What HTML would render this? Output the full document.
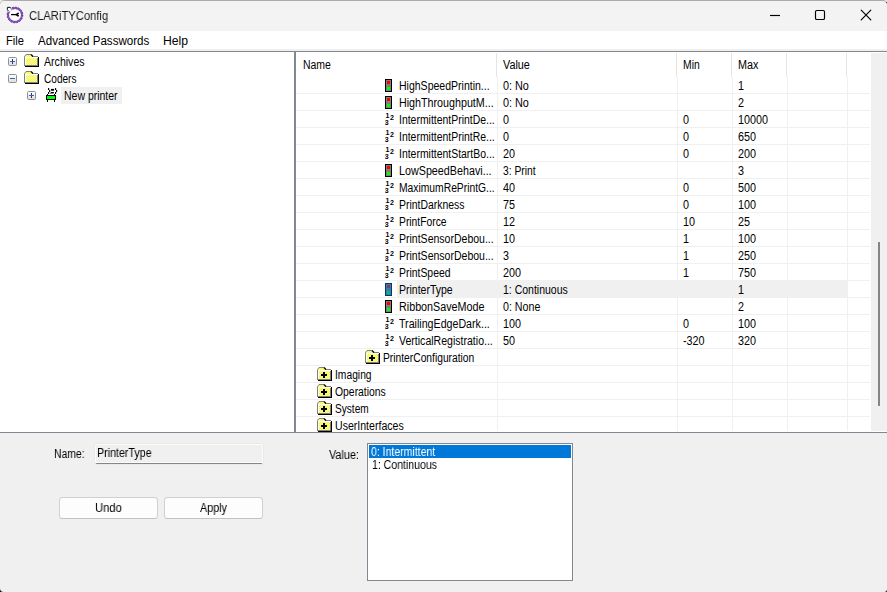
<!DOCTYPE html>
<html><head><meta charset="utf-8"><title>CLARiTYConfig</title>
<style>
html,body{margin:0;padding:0;}
body{width:887px;height:592px;overflow:hidden;background:#f0f0f0;position:relative;font-family:"Liberation Sans",sans-serif;font-size:11px;color:#000;}
.abs,.ic,.t{position:absolute;}
.t{white-space:nowrap;font-size:12px;line-height:14px;height:14px;}
#title{left:0;top:0;width:887px;height:31px;background:#f3f3f3;}
#menu{left:0;top:31px;width:887px;height:18px;background:#fff;}
.seg{font-size:12px;line-height:15px;height:15px;}
.ttl{color:#1c1c1c;will-change:transform;}
.bm{font-size:12px;line-height:14px;height:14px;will-change:transform;}
#tree{left:0;top:52px;width:294px;height:380px;background:#fff;}
#grid{left:296px;top:52px;width:591px;height:380px;background:#fff;overflow:hidden;}
.hl{background:#f0f0f0;}
.vl{position:absolute;width:1px;background:#f0f0f0;}
.hs{position:absolute;width:1px;background:#e5e5e5;top:1px;height:24px;}
.rl{position:absolute;height:1px;background:#f0f0f0;left:0;width:574px;}
.btn{position:absolute;box-sizing:border-box;border:1px solid #d0d0d0;border-bottom-color:#c2c2c2;border-radius:3.5px;background:#fdfdfd;height:22px;}
</style></head><body>
<svg width="0" height="0" style="position:absolute"><defs>
<pattern id="dith" width="2" height="2" patternUnits="userSpaceOnUse"><rect width="2" height="2" fill="#ffff00"/><rect x="0" y="0" width="1" height="1" fill="#f2f2f2"/><rect x="1" y="1" width="1" height="1" fill="#f2f2f2"/></pattern>
<linearGradient id="gb" x1="0" y1="0" x2="0" y2="1"><stop offset="0" stop-color="#fff"/><stop offset="1" stop-color="#dcdcdc"/></linearGradient>
</defs></svg>

<div id="title" class="abs"></div>
<div class="abs" style="left:0;top:0;width:887px;height:1px;background:#ababab"></div>
<svg class="ic" style="left:6px;top:6px" width="18" height="18" viewBox="0 0 18 18"><circle cx="9" cy="9" r="8.3" fill="#fafafa"/><circle cx="9" cy="9" r="7.05" fill="#fff" stroke="#9152cc" stroke-width="2"/><circle cx="9" cy="9" r="7.9" fill="none" stroke="#2e1a5e" stroke-width="0.7" stroke-dasharray="1.6 1.5"/><circle cx="9" cy="9" r="6.3" fill="none" stroke="#2e1a5e" stroke-width="0.5" stroke-dasharray="1.4 1.6"/><path d="M1 1 H4.4 L5.9 2.3 L5.2 4.3 L4.3 5.2 L2.3 5.9 L1 4.6 Z" fill="#fff"/><path d="M2.6 5.2 L1.4 3.8 V1.4 H4 L5.3 2.5" fill="none" stroke="#111" stroke-width="1"/><path d="M5 8.6 H10.5" stroke="#000" stroke-width="1.3" fill="none"/><path d="M12.1 7.5 L10.4 8.6 L12.1 9.8" stroke="#000" stroke-width="1.7" fill="none" stroke-linejoin="round" stroke-linecap="round"/></svg>
<div class="t seg ttl" id="x1" style="left:29px;top:9px;transform:scaleX(0.9350);transform-origin:0 0;">CLARiTYConfig</div>
<svg class="ic" style="left:760px;top:0" width="127" height="31" viewBox="0 0 127 31"><path d="M10 15.5 H20" stroke="#000" stroke-width="1.15"/><rect x="55.5" y="10.5" width="9" height="9" rx="1.3" fill="none" stroke="#000" stroke-width="1.15"/><path d="M101.2 10.2 L110.8 19.8 M110.8 10.2 L101.2 19.8" stroke="#000" stroke-width="1.2" fill="none" stroke-linecap="round"/></svg>
<div id="menu" class="abs"></div>
<div class="t seg" id="x2" style="left:6.3px;top:34px;transform:scaleX(0.9254);transform-origin:0 0;">File</div>
<div class="t seg" id="x3" style="left:38px;top:34px;transform:scaleX(0.9644);transform-origin:0 0;">Advanced Passwords</div>
<div class="t seg" id="x4" style="left:163px;top:34px;transform:scaleX(1.0167);transform-origin:0 0;">Help</div>
<div class="abs" style="left:0;top:51px;width:887px;height:1px;background:#828790"></div>
<div id="tree" class="abs"></div>
<div class="abs" style="left:294px;top:52px;width:2px;height:380px;background:#828790"></div>
<svg class="ic" style="left:8px;top:57px" width="9" height="9" viewBox="0 0 9 9"><rect x="0.5" y="0.5" width="8" height="8" rx="1" fill="url(#gb)" stroke="#8f8f8f"/><path d="M4.5 2 V7" stroke="#24357a" stroke-width="1" fill="none" shape-rendering="crispEdges"/><path d="M2 4.5 H7" stroke="#3f5fb0" stroke-width="1" fill="none" shape-rendering="crispEdges"/></svg>
<svg class="ic" style="left:24px;top:54px" width="15" height="13" viewBox="0 0 15 13" shape-rendering="crispEdges"><path d="M1 2.5 L2 1 L7 1 L8.5 2.5 L14 2.5 L14 12 L1 12 Z" fill="url(#dith)"/><path d="M0.5 12 V2.5 L2 0.5 H7" fill="none" stroke="#808080" shape-rendering="auto"/><path d="M8 2.5 H14" fill="none" stroke="#808080"/><path d="M7 0.5 L9 2.5" fill="none" stroke="#000" stroke-width="1.2" shape-rendering="auto"/><path d="M1.5 11 V3.5 H13" fill="none" stroke="#fff"/><path d="M14.5 3 V12.5 H1" fill="none" stroke="#000"/><path d="M13.5 4 V11.5 H1" fill="none" stroke="#808080"/></svg>
<div class="t" id="x5" style="left:44px;top:55px;transform:scaleX(0.8823);transform-origin:0 0;">Archives</div>
<svg class="ic" style="left:8px;top:74px" width="9" height="9" viewBox="0 0 9 9"><rect x="0.5" y="0.5" width="8" height="8" rx="1" fill="url(#gb)" stroke="#8f8f8f"/><path d="M2 4.5 H7" stroke="#3f5fb0" stroke-width="1" fill="none" shape-rendering="crispEdges"/></svg>
<svg class="ic" style="left:24px;top:71px" width="15" height="13" viewBox="0 0 15 13" shape-rendering="crispEdges"><path d="M1 2.5 L2 1 L7 1 L8.5 2.5 L14 2.5 L14 12 L1 12 Z" fill="url(#dith)"/><path d="M0.5 12 V2.5 L2 0.5 H7" fill="none" stroke="#808080" shape-rendering="auto"/><path d="M8 2.5 H14" fill="none" stroke="#808080"/><path d="M7 0.5 L9 2.5" fill="none" stroke="#000" stroke-width="1.2" shape-rendering="auto"/><path d="M1.5 11 V3.5 H13" fill="none" stroke="#fff"/><path d="M14.5 3 V12.5 H1" fill="none" stroke="#000"/><path d="M13.5 4 V11.5 H1" fill="none" stroke="#808080"/></svg>
<div class="t" id="x6" style="left:44px;top:72px;transform:scaleX(0.8401);transform-origin:0 0;">Coders</div>
<svg class="ic" style="left:27px;top:91px" width="9" height="9" viewBox="0 0 9 9"><rect x="0.5" y="0.5" width="8" height="8" rx="1" fill="url(#gb)" stroke="#8f8f8f"/><path d="M4.5 2 V7" stroke="#24357a" stroke-width="1" fill="none" shape-rendering="crispEdges"/><path d="M2 4.5 H7" stroke="#3f5fb0" stroke-width="1" fill="none" shape-rendering="crispEdges"/></svg>
<svg class="ic" style="left:45px;top:87px" width="14" height="16" viewBox="0 0 14 16"><g shape-rendering="crispEdges"><rect x="1" y="8" width="10" height="5" fill="#000"/><rect x="2" y="9" width="8" height="3" fill="#00ff00"/><rect x="2" y="13" width="1" height="2" fill="#000"/><rect x="9" y="13" width="1" height="2" fill="#000"/><rect x="2" y="7" width="1" height="1" fill="#000"/><rect x="9" y="7" width="1" height="1" fill="#000"/></g><g fill="#000"><rect x="3" y="1" width="1.2" height="2.1" rx="0.3"/><rect x="4" y="3" width="1.2" height="2.1" rx="0.3"/><rect x="3" y="5" width="1.2" height="2.1" rx="0.3"/><rect x="10" y="1" width="1.2" height="2.1" rx="0.3"/><rect x="11" y="3" width="1.2" height="2.1" rx="0.3"/><rect x="10" y="5" width="1.2" height="2.1" rx="0.3"/><rect x="5.9" y="1.9" width="3.2" height="1.8"/><path d="M5 6.6 L6 5 H9.2 L8.4 6.6 Z"/></g></svg>
<div class="abs hl" style="left:61px;top:87px;width:61px;height:17px;"></div>
<div class="t" id="x7" style="left:63.5px;top:89px;transform:scaleX(0.8735);transform-origin:0 0;">New printer</div>
<div id="grid" class="abs">
<div class="hs" style="left:200px"></div>
<div class="hs" style="left:380px"></div>
<div class="hs" style="left:435px"></div>
<div class="hs" style="left:490px"></div>
<div class="hs" style="left:550px"></div>
<div class="abs hl" style="left:101px;top:229px;width:450px;height:16px;"></div>
<div class="vl" style="left:201px;top:25px;height:354px"></div>
<div class="vl" style="left:381px;top:25px;height:354px"></div>
<div class="vl" style="left:436px;top:25px;height:354px"></div>
<div class="vl" style="left:491px;top:25px;height:354px"></div>
<div class="vl" style="left:551px;top:25px;height:354px"></div>
<div class="rl" style="top:41px"></div>
<div class="rl" style="top:58px"></div>
<div class="rl" style="top:75px"></div>
<div class="rl" style="top:92px"></div>
<div class="rl" style="top:109px"></div>
<div class="rl" style="top:126px"></div>
<div class="rl" style="top:143px"></div>
<div class="rl" style="top:160px"></div>
<div class="rl" style="top:177px"></div>
<div class="rl" style="top:194px"></div>
<div class="rl" style="top:211px"></div>
<div class="rl" style="top:228px"></div>
<div class="rl" style="top:245px"></div>
<div class="rl" style="top:262px"></div>
<div class="rl" style="top:279px"></div>
<div class="rl" style="top:296px"></div>
<div class="rl" style="top:313px"></div>
<div class="rl" style="top:330px"></div>
<div class="rl" style="top:347px"></div>
<div class="rl" style="top:364px"></div>
<div class="abs" style="left:575px;top:1px;width:16px;height:378px;background:#f0f0f0"></div>
<div class="abs" style="left:582px;top:190px;width:2px;height:164px;background:#858585"></div>
<div class="t" id="x8" style="left:7px;top:6px;transform:scaleX(0.8714);transform-origin:0 0;">Name</div>
<div class="t" id="x9" style="left:207px;top:6px;transform:scaleX(0.9023);transform-origin:0 0;">Value</div>
<div class="t" id="x10" style="left:387px;top:6px;transform:scaleX(0.8633);transform-origin:0 0;">Min</div>
<div class="t" id="x11" style="left:442px;top:6px;transform:scaleX(0.9000);transform-origin:0 0;">Max</div>
<svg class="ic" style="left:89px;top:27px" width="7" height="13" viewBox="0 0 7 13" shape-rendering="crispEdges"><rect x="0" y="0" width="7" height="13" fill="#000"/><rect x="1" y="1" width="5" height="11" fill="#808080"/><rect x="2" y="2" width="3" height="3" fill="#ff0000"/><rect x="2" y="8" width="3" height="3" fill="#00ff00"/></svg>
<div class="t" id="x12" style="left:103px;top:27px;transform:scaleX(0.8762);transform-origin:0 0;">HighSpeedPrintin...</div>
<div class="t" id="x13" style="left:207px;top:27px;transform:scaleX(0.9028);transform-origin:0 0;">0: No</div>
<div class="t" id="x14" style="left:442px;top:27px;transform:scaleX(0.9000);transform-origin:0 0;">1</div>
<svg class="ic" style="left:89px;top:44px" width="7" height="13" viewBox="0 0 7 13" shape-rendering="crispEdges"><rect x="0" y="0" width="7" height="13" fill="#000"/><rect x="1" y="1" width="5" height="11" fill="#808080"/><rect x="2" y="2" width="3" height="3" fill="#ff0000"/><rect x="2" y="8" width="3" height="3" fill="#00ff00"/></svg>
<div class="t" id="x15" style="left:103px;top:44px;transform:scaleX(0.8929);transform-origin:0 0;">HighThroughputM...</div>
<div class="t" id="x16" style="left:207px;top:44px;transform:scaleX(0.9028);transform-origin:0 0;">0: No</div>
<div class="t" id="x17" style="left:442px;top:44px;transform:scaleX(0.9000);transform-origin:0 0;">2</div>
<svg class="ic" style="left:89px;top:61px" width="11" height="13" viewBox="0 0 11 13"><text x="0.6" y="5" font-family="Liberation Sans, sans-serif" font-size="7" font-weight="bold" fill="#000">1</text><text x="5" y="7" font-family="Liberation Sans, sans-serif" font-size="7" font-weight="bold" fill="#000">2</text><text x="-0.2" y="12" font-family="Liberation Sans, sans-serif" font-size="7" font-weight="bold" fill="#000">3</text></svg>
<div class="t" id="x18" style="left:103px;top:61px;transform:scaleX(0.8696);transform-origin:0 0;">IntermittentPrintDe...</div>
<div class="t" id="x19" style="left:207px;top:61px;transform:scaleX(0.9000);transform-origin:0 0;">0</div>
<div class="t" id="x20" style="left:387px;top:61px;transform:scaleX(0.9000);transform-origin:0 0;">0</div>
<div class="t" id="x21" style="left:442px;top:61px;transform:scaleX(0.9000);transform-origin:0 0;">10000</div>
<svg class="ic" style="left:89px;top:78px" width="11" height="13" viewBox="0 0 11 13"><text x="0.6" y="5" font-family="Liberation Sans, sans-serif" font-size="7" font-weight="bold" fill="#000">1</text><text x="5" y="7" font-family="Liberation Sans, sans-serif" font-size="7" font-weight="bold" fill="#000">2</text><text x="-0.2" y="12" font-family="Liberation Sans, sans-serif" font-size="7" font-weight="bold" fill="#000">3</text></svg>
<div class="t" id="x22" style="left:103px;top:78px;transform:scaleX(0.8696);transform-origin:0 0;">IntermittentPrintRe...</div>
<div class="t" id="x23" style="left:207px;top:78px;transform:scaleX(0.9000);transform-origin:0 0;">0</div>
<div class="t" id="x24" style="left:387px;top:78px;transform:scaleX(0.9000);transform-origin:0 0;">0</div>
<div class="t" id="x25" style="left:442px;top:78px;transform:scaleX(0.9000);transform-origin:0 0;">650</div>
<svg class="ic" style="left:89px;top:95px" width="11" height="13" viewBox="0 0 11 13"><text x="0.6" y="5" font-family="Liberation Sans, sans-serif" font-size="7" font-weight="bold" fill="#000">1</text><text x="5" y="7" font-family="Liberation Sans, sans-serif" font-size="7" font-weight="bold" fill="#000">2</text><text x="-0.2" y="12" font-family="Liberation Sans, sans-serif" font-size="7" font-weight="bold" fill="#000">3</text></svg>
<div class="t" id="x26" style="left:103px;top:95px;transform:scaleX(0.8696);transform-origin:0 0;">IntermittentStartBo...</div>
<div class="t" id="x27" style="left:207px;top:95px;transform:scaleX(0.9000);transform-origin:0 0;">20</div>
<div class="t" id="x28" style="left:387px;top:95px;transform:scaleX(0.9000);transform-origin:0 0;">0</div>
<div class="t" id="x29" style="left:442px;top:95px;transform:scaleX(0.9000);transform-origin:0 0;">200</div>
<svg class="ic" style="left:89px;top:112px" width="7" height="13" viewBox="0 0 7 13" shape-rendering="crispEdges"><rect x="0" y="0" width="7" height="13" fill="#000"/><rect x="1" y="1" width="5" height="11" fill="#808080"/><rect x="2" y="2" width="3" height="3" fill="#ff0000"/><rect x="2" y="8" width="3" height="3" fill="#00ff00"/></svg>
<div class="t" id="x30" style="left:103px;top:112px;transform:scaleX(0.8955);transform-origin:0 0;">LowSpeedBehavi...</div>
<div class="t" id="x31" style="left:207px;top:112px;transform:scaleX(0.8575);transform-origin:0 0;">3: Print</div>
<div class="t" id="x32" style="left:442px;top:112px;transform:scaleX(0.9000);transform-origin:0 0;">3</div>
<svg class="ic" style="left:89px;top:129px" width="11" height="13" viewBox="0 0 11 13"><text x="0.6" y="5" font-family="Liberation Sans, sans-serif" font-size="7" font-weight="bold" fill="#000">1</text><text x="5" y="7" font-family="Liberation Sans, sans-serif" font-size="7" font-weight="bold" fill="#000">2</text><text x="-0.2" y="12" font-family="Liberation Sans, sans-serif" font-size="7" font-weight="bold" fill="#000">3</text></svg>
<div class="t" id="x33" style="left:103px;top:129px;transform:scaleX(0.8594);transform-origin:0 0;">MaximumRePrintG...</div>
<div class="t" id="x34" style="left:207px;top:129px;transform:scaleX(0.9000);transform-origin:0 0;">40</div>
<div class="t" id="x35" style="left:387px;top:129px;transform:scaleX(0.9000);transform-origin:0 0;">0</div>
<div class="t" id="x36" style="left:442px;top:129px;transform:scaleX(0.9000);transform-origin:0 0;">500</div>
<svg class="ic" style="left:89px;top:146px" width="11" height="13" viewBox="0 0 11 13"><text x="0.6" y="5" font-family="Liberation Sans, sans-serif" font-size="7" font-weight="bold" fill="#000">1</text><text x="5" y="7" font-family="Liberation Sans, sans-serif" font-size="7" font-weight="bold" fill="#000">2</text><text x="-0.2" y="12" font-family="Liberation Sans, sans-serif" font-size="7" font-weight="bold" fill="#000">3</text></svg>
<div class="t" id="x37" style="left:103px;top:146px;transform:scaleX(0.8692);transform-origin:0 0;">PrintDarkness</div>
<div class="t" id="x38" style="left:207px;top:146px;transform:scaleX(0.9000);transform-origin:0 0;">75</div>
<div class="t" id="x39" style="left:387px;top:146px;transform:scaleX(0.9000);transform-origin:0 0;">0</div>
<div class="t" id="x40" style="left:442px;top:146px;transform:scaleX(0.9000);transform-origin:0 0;">100</div>
<svg class="ic" style="left:89px;top:163px" width="11" height="13" viewBox="0 0 11 13"><text x="0.6" y="5" font-family="Liberation Sans, sans-serif" font-size="7" font-weight="bold" fill="#000">1</text><text x="5" y="7" font-family="Liberation Sans, sans-serif" font-size="7" font-weight="bold" fill="#000">2</text><text x="-0.2" y="12" font-family="Liberation Sans, sans-serif" font-size="7" font-weight="bold" fill="#000">3</text></svg>
<div class="t" id="x41" style="left:103px;top:163px;transform:scaleX(0.8598);transform-origin:0 0;">PrintForce</div>
<div class="t" id="x42" style="left:207px;top:163px;transform:scaleX(0.9000);transform-origin:0 0;">12</div>
<div class="t" id="x43" style="left:387px;top:163px;transform:scaleX(0.9000);transform-origin:0 0;">10</div>
<div class="t" id="x44" style="left:442px;top:163px;transform:scaleX(0.9000);transform-origin:0 0;">25</div>
<svg class="ic" style="left:89px;top:180px" width="11" height="13" viewBox="0 0 11 13"><text x="0.6" y="5" font-family="Liberation Sans, sans-serif" font-size="7" font-weight="bold" fill="#000">1</text><text x="5" y="7" font-family="Liberation Sans, sans-serif" font-size="7" font-weight="bold" fill="#000">2</text><text x="-0.2" y="12" font-family="Liberation Sans, sans-serif" font-size="7" font-weight="bold" fill="#000">3</text></svg>
<div class="t" id="x45" style="left:103px;top:180px;transform:scaleX(0.8763);transform-origin:0 0;">PrintSensorDebou...</div>
<div class="t" id="x46" style="left:207px;top:180px;transform:scaleX(0.9000);transform-origin:0 0;">10</div>
<div class="t" id="x47" style="left:387px;top:180px;transform:scaleX(0.9000);transform-origin:0 0;">1</div>
<div class="t" id="x48" style="left:442px;top:180px;transform:scaleX(0.9000);transform-origin:0 0;">100</div>
<svg class="ic" style="left:89px;top:197px" width="11" height="13" viewBox="0 0 11 13"><text x="0.6" y="5" font-family="Liberation Sans, sans-serif" font-size="7" font-weight="bold" fill="#000">1</text><text x="5" y="7" font-family="Liberation Sans, sans-serif" font-size="7" font-weight="bold" fill="#000">2</text><text x="-0.2" y="12" font-family="Liberation Sans, sans-serif" font-size="7" font-weight="bold" fill="#000">3</text></svg>
<div class="t" id="x49" style="left:103px;top:197px;transform:scaleX(0.8763);transform-origin:0 0;">PrintSensorDebou...</div>
<div class="t" id="x50" style="left:207px;top:197px;transform:scaleX(0.9000);transform-origin:0 0;">3</div>
<div class="t" id="x51" style="left:387px;top:197px;transform:scaleX(0.9000);transform-origin:0 0;">1</div>
<div class="t" id="x52" style="left:442px;top:197px;transform:scaleX(0.9000);transform-origin:0 0;">250</div>
<svg class="ic" style="left:89px;top:214px" width="11" height="13" viewBox="0 0 11 13"><text x="0.6" y="5" font-family="Liberation Sans, sans-serif" font-size="7" font-weight="bold" fill="#000">1</text><text x="5" y="7" font-family="Liberation Sans, sans-serif" font-size="7" font-weight="bold" fill="#000">2</text><text x="-0.2" y="12" font-family="Liberation Sans, sans-serif" font-size="7" font-weight="bold" fill="#000">3</text></svg>
<div class="t" id="x53" style="left:103px;top:214px;transform:scaleX(0.8674);transform-origin:0 0;">PrintSpeed</div>
<div class="t" id="x54" style="left:207px;top:214px;transform:scaleX(0.9000);transform-origin:0 0;">200</div>
<div class="t" id="x55" style="left:387px;top:214px;transform:scaleX(0.9000);transform-origin:0 0;">1</div>
<div class="t" id="x56" style="left:442px;top:214px;transform:scaleX(0.9000);transform-origin:0 0;">750</div>
<svg class="ic" style="left:89px;top:231px" width="7" height="13" viewBox="0 0 7 13" shape-rendering="crispEdges"><rect x="0" y="0" width="7" height="13" fill="#003c6b"/><rect x="1" y="1" width="5" height="11" fill="#407cab"/><rect x="2" y="2" width="3" height="3" fill="#7f3c6b"/><rect x="2" y="8" width="3" height="3" fill="#00bb6b"/></svg>
<div class="t" id="x57" style="left:103px;top:231px;transform:scaleX(0.8752);transform-origin:0 0;">PrinterType</div>
<div class="t" id="x58" style="left:207px;top:231px;transform:scaleX(0.8749);transform-origin:0 0;">1: Continuous</div>
<div class="t" id="x59" style="left:442px;top:231px;transform:scaleX(0.9000);transform-origin:0 0;">1</div>
<svg class="ic" style="left:89px;top:248px" width="7" height="13" viewBox="0 0 7 13" shape-rendering="crispEdges"><rect x="0" y="0" width="7" height="13" fill="#000"/><rect x="1" y="1" width="5" height="11" fill="#808080"/><rect x="2" y="2" width="3" height="3" fill="#ff0000"/><rect x="2" y="8" width="3" height="3" fill="#00ff00"/></svg>
<div class="t" id="x60" style="left:103px;top:248px;transform:scaleX(0.8962);transform-origin:0 0;">RibbonSaveMode</div>
<div class="t" id="x61" style="left:207px;top:248px;transform:scaleX(0.8898);transform-origin:0 0;">0: None</div>
<div class="t" id="x62" style="left:442px;top:248px;transform:scaleX(0.9000);transform-origin:0 0;">2</div>
<svg class="ic" style="left:89px;top:265px" width="11" height="13" viewBox="0 0 11 13"><text x="0.6" y="5" font-family="Liberation Sans, sans-serif" font-size="7" font-weight="bold" fill="#000">1</text><text x="5" y="7" font-family="Liberation Sans, sans-serif" font-size="7" font-weight="bold" fill="#000">2</text><text x="-0.2" y="12" font-family="Liberation Sans, sans-serif" font-size="7" font-weight="bold" fill="#000">3</text></svg>
<div class="t" id="x63" style="left:103px;top:265px;transform:scaleX(0.8879);transform-origin:0 0;">TrailingEdgeDark...</div>
<div class="t" id="x64" style="left:207px;top:265px;transform:scaleX(0.9000);transform-origin:0 0;">100</div>
<div class="t" id="x65" style="left:387px;top:265px;transform:scaleX(0.9000);transform-origin:0 0;">0</div>
<div class="t" id="x66" style="left:442px;top:265px;transform:scaleX(0.9000);transform-origin:0 0;">100</div>
<svg class="ic" style="left:89px;top:282px" width="11" height="13" viewBox="0 0 11 13"><text x="0.6" y="5" font-family="Liberation Sans, sans-serif" font-size="7" font-weight="bold" fill="#000">1</text><text x="5" y="7" font-family="Liberation Sans, sans-serif" font-size="7" font-weight="bold" fill="#000">2</text><text x="-0.2" y="12" font-family="Liberation Sans, sans-serif" font-size="7" font-weight="bold" fill="#000">3</text></svg>
<div class="t" id="x67" style="left:103px;top:282px;transform:scaleX(0.8789);transform-origin:0 0;">VerticalRegistratio...</div>
<div class="t" id="x68" style="left:207px;top:282px;transform:scaleX(0.9000);transform-origin:0 0;">50</div>
<div class="t" id="x69" style="left:387px;top:282px;transform:scaleX(0.9000);transform-origin:0 0;">-320</div>
<div class="t" id="x70" style="left:442px;top:282px;transform:scaleX(0.9000);transform-origin:0 0;">320</div>
<svg class="ic" style="left:69px;top:298px" width="15" height="14" viewBox="0 0 15 14" shape-rendering="crispEdges"><path d="M1 2.5 L2 1 L7 1 L8.5 2.5 L14 2.5 L14 13 L1 13 Z" fill="url(#dith)"/><path d="M0.5 13 V2.5 L2 0.5 H7" fill="none" stroke="#808080" shape-rendering="auto"/><path d="M8 2.5 H14" fill="none" stroke="#808080"/><path d="M7 0.5 L9 2.5" fill="none" stroke="#000" stroke-width="1.2" shape-rendering="auto"/><path d="M1.5 12 V3.5 H13" fill="none" stroke="#fff"/><path d="M14.5 3 V13.5 H1" fill="none" stroke="#000"/><path d="M13.5 4 V12.5 H1" fill="none" stroke="#808080"/><rect x="4" y="7" width="6" height="2" fill="#000"/><rect x="6" y="5" width="2" height="6" fill="#000"/></svg>
<div class="t" id="x71" style="left:87.30000000000001px;top:299px;transform:scaleX(0.8554);transform-origin:0 0;">PrinterConfiguration</div>
<svg class="ic" style="left:21px;top:315px" width="15" height="14" viewBox="0 0 15 14" shape-rendering="crispEdges"><path d="M1 2.5 L2 1 L7 1 L8.5 2.5 L14 2.5 L14 13 L1 13 Z" fill="url(#dith)"/><path d="M0.5 13 V2.5 L2 0.5 H7" fill="none" stroke="#808080" shape-rendering="auto"/><path d="M8 2.5 H14" fill="none" stroke="#808080"/><path d="M7 0.5 L9 2.5" fill="none" stroke="#000" stroke-width="1.2" shape-rendering="auto"/><path d="M1.5 12 V3.5 H13" fill="none" stroke="#fff"/><path d="M14.5 3 V13.5 H1" fill="none" stroke="#000"/><path d="M13.5 4 V12.5 H1" fill="none" stroke="#808080"/><rect x="4" y="7" width="6" height="2" fill="#000"/><rect x="6" y="5" width="2" height="6" fill="#000"/></svg>
<div class="t" id="x72" style="left:39px;top:316px;transform:scaleX(0.8571);transform-origin:0 0;">Imaging</div>
<svg class="ic" style="left:21px;top:332px" width="15" height="14" viewBox="0 0 15 14" shape-rendering="crispEdges"><path d="M1 2.5 L2 1 L7 1 L8.5 2.5 L14 2.5 L14 13 L1 13 Z" fill="url(#dith)"/><path d="M0.5 13 V2.5 L2 0.5 H7" fill="none" stroke="#808080" shape-rendering="auto"/><path d="M8 2.5 H14" fill="none" stroke="#808080"/><path d="M7 0.5 L9 2.5" fill="none" stroke="#000" stroke-width="1.2" shape-rendering="auto"/><path d="M1.5 12 V3.5 H13" fill="none" stroke="#fff"/><path d="M14.5 3 V13.5 H1" fill="none" stroke="#000"/><path d="M13.5 4 V12.5 H1" fill="none" stroke="#808080"/><rect x="4" y="7" width="6" height="2" fill="#000"/><rect x="6" y="5" width="2" height="6" fill="#000"/></svg>
<div class="t" id="x73" style="left:39px;top:333px;transform:scaleX(0.8654);transform-origin:0 0;">Operations</div>
<svg class="ic" style="left:21px;top:349px" width="15" height="14" viewBox="0 0 15 14" shape-rendering="crispEdges"><path d="M1 2.5 L2 1 L7 1 L8.5 2.5 L14 2.5 L14 13 L1 13 Z" fill="url(#dith)"/><path d="M0.5 13 V2.5 L2 0.5 H7" fill="none" stroke="#808080" shape-rendering="auto"/><path d="M8 2.5 H14" fill="none" stroke="#808080"/><path d="M7 0.5 L9 2.5" fill="none" stroke="#000" stroke-width="1.2" shape-rendering="auto"/><path d="M1.5 12 V3.5 H13" fill="none" stroke="#fff"/><path d="M14.5 3 V13.5 H1" fill="none" stroke="#000"/><path d="M13.5 4 V12.5 H1" fill="none" stroke="#808080"/><rect x="4" y="7" width="6" height="2" fill="#000"/><rect x="6" y="5" width="2" height="6" fill="#000"/></svg>
<div class="t" id="x74" style="left:39px;top:350px;transform:scaleX(0.8422);transform-origin:0 0;">System</div>
<svg class="ic" style="left:21px;top:366px" width="15" height="14" viewBox="0 0 15 14" shape-rendering="crispEdges"><path d="M1 2.5 L2 1 L7 1 L8.5 2.5 L14 2.5 L14 13 L1 13 Z" fill="url(#dith)"/><path d="M0.5 13 V2.5 L2 0.5 H7" fill="none" stroke="#808080" shape-rendering="auto"/><path d="M8 2.5 H14" fill="none" stroke="#808080"/><path d="M7 0.5 L9 2.5" fill="none" stroke="#000" stroke-width="1.2" shape-rendering="auto"/><path d="M1.5 12 V3.5 H13" fill="none" stroke="#fff"/><path d="M14.5 3 V13.5 H1" fill="none" stroke="#000"/><path d="M13.5 4 V12.5 H1" fill="none" stroke="#808080"/><rect x="4" y="7" width="6" height="2" fill="#000"/><rect x="6" y="5" width="2" height="6" fill="#000"/></svg>
<div class="t" id="x75" style="left:39px;top:367px;transform:scaleX(0.8804);transform-origin:0 0;">UserInterfaces</div>
</div>
<div class="abs" style="left:0;top:432px;width:887px;height:1px;background:#828790"></div>
<div class="t bm" id="x76" style="left:54.3px;top:446.5px;transform:scaleX(0.8658);transform-origin:0 0;">Name:</div>
<div class="abs" style="left:94px;top:443px;width:170px;height:22px;box-sizing:border-box;border:1px solid #e9e9e9;border-radius:3px;"></div>
<div class="abs" style="left:95px;top:444px;width:168px;height:20px;box-sizing:border-box;border:1px solid #fcfcfc;border-bottom:1px solid #868686;border-radius:2px;background:#f0f0f0"></div>
<div class="abs" style="left:96px;top:462px;width:166px;height:1px;background:#fcfcfc"></div>
<div class="t bm" id="x77" style="left:97.3px;top:445.5px;transform:scaleX(0.8898);transform-origin:0 0;">PrinterType</div>
<div class="btn" style="left:59px;top:497px;width:99px;"></div>
<div class="btn" style="left:164px;top:497px;width:99px;"></div>
<div class="t bm" id="x78" style="left:95.0px;top:500.8px;transform:scaleX(0.9342);transform-origin:0 0;">Undo</div>
<div class="t bm" id="x79" style="left:199.5px;top:500.8px;transform:scaleX(0.8991);transform-origin:0 0;">Apply</div>
<div class="t bm" id="x80" style="left:329.0px;top:447.7px;transform:scaleX(0.9022);transform-origin:0 0;">Value:</div>
<div class="abs" style="left:367px;top:443px;width:206px;height:138px;box-sizing:border-box;border:1px solid #828790;background:#fff"></div>
<div class="abs" style="left:369px;top:445px;width:202px;height:13px;background:#0078d7"></div>
<div class="t bm" id="x81" style="left:371.2px;top:444.7px;transform:scaleX(0.8763);transform-origin:0 0;color:#fff;">0: Intermittent</div>
<div class="t bm" id="x82" style="left:371.5px;top:457.7px;transform:scaleX(0.8776);transform-origin:0 0;">1: Continuous</div>
<svg class="ic" style="left:0;top:588px" width="4" height="4" viewBox="0 0 4 4"><path d="M0 0.3 Q0 4 3.7 4 H0 Z" fill="#151515"/></svg>
<svg class="ic" style="left:883px;top:588px" width="4" height="4" viewBox="0 0 4 4"><path d="M4 1.6 Q4 4 1.6 4 H4 Z" fill="#222"/></svg>
<svg class="ic" style="left:0;top:0" width="6" height="6" viewBox="0 0 6 6"><path d="M0 0 H5 Q0 0 0 5 Z" fill="#ebebeb"/><path d="M0 4 Q0.5 0.5 4.5 0.3" stroke="#c2c2c2" stroke-width="0.9" fill="none"/></svg>
<svg class="ic" style="left:881px;top:0" width="6" height="6" viewBox="0 0 6 6"><path d="M6 0 H1 Q6 0 6 5 Z" fill="#ebebeb"/><path d="M6 4 Q5.5 0.5 1.5 0.3" stroke="#b0b0b0" stroke-width="0.9" fill="none"/><rect x="5" y="2" width="1" height="1" fill="#555"/></svg>
</body></html>
